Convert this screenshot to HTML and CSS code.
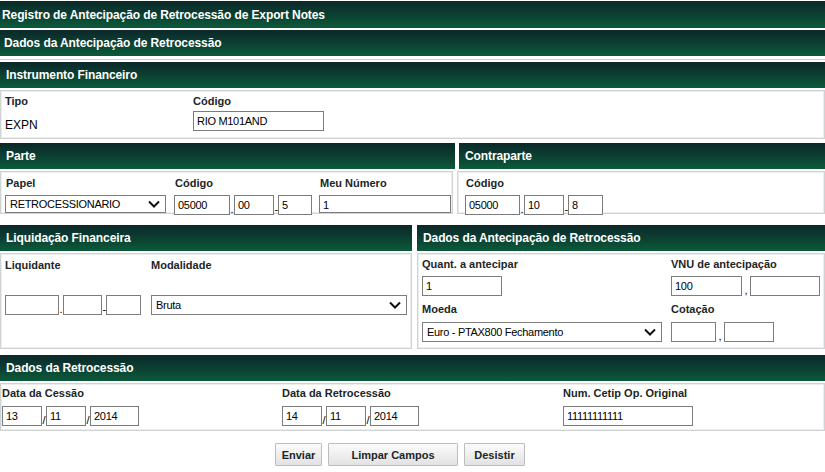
FILE: index.html
```html
<!DOCTYPE html>
<html lang="pt">
<head>
<meta charset="utf-8">
<link rel="stylesheet" href="styles.css">
</head>
<body>
<div class="page">
  <div class="bar title">Registro de Antecipação de Retrocessão de Export Notes</div>
  <div class="bar sub">Dados da Antecipação de Retrocessão</div>
  <div class="form">
    <section class="sec">
      <div class="bar h">Instrumento Financeiro</div>
      <div class="panel p-instr">
        <div class="col c-tipo">
          <div class="lbl">Tipo</div>
          <div class="val">EXPN</div>
        </div>
        <div class="col">
          <div class="lbl">Código</div>
          <div class="inp w131">RIO M101AND</div>
        </div>
      </div>
    </section>

    <div class="pair pair-a">
      <section class="sec">
        <div class="bar h">Parte</div>
        <div class="panel p-parte">
          <div class="col c-papel">
            <div class="lbl">Papel</div>
            <div class="sel w161"><span>RETROCESSIONARIO</span><svg width="14" height="10" viewBox="0 0 14 10"><path d="M2 2.5 L7 7.5 L12 2.5" fill="none" stroke="#111" stroke-width="2"/></svg></div>
          </div>
          <div class="col c-cod">
            <div class="lbl">Código</div>
            <div class="grp"><div class="inp w56">05000</div><span class="sep">.</span><div class="inp w40">00</div><span class="sep">-</span><div class="inp w34">5</div></div>
          </div>
          <div class="col">
            <div class="lbl">Meu Número</div>
            <div class="inp w132">1</div>
          </div>
        </div>
      </section>
      <section class="sec">
        <div class="bar h">Contraparte</div>
        <div class="panel p-contra">
          <div class="col">
            <div class="lbl">Código</div>
            <div class="grp"><div class="inp w55">05000</div><span class="sep">.</span><div class="inp w40">10</div><span class="sep">-</span><div class="inp w35">8</div></div>
          </div>
        </div>
      </section>
    </div>

    <div class="pair pair-b">
      <section class="sec">
        <div class="bar h">Liquidação Financeira</div>
        <div class="panel p-liq">
          <div class="col c-liq">
            <div class="lbl">Liquidante</div>
            <div class="grp low"><div class="inp w54"></div><span class="sep">.</span><div class="inp w39"></div><span class="sep">-</span><div class="inp w35"></div></div>
          </div>
          <div class="col">
            <div class="lbl">Modalidade</div>
            <div class="sel w256 low"><span>Bruta</span><svg width="14" height="10" viewBox="0 0 14 10"><path d="M2 2.5 L7 7.5 L12 2.5" fill="none" stroke="#111" stroke-width="2"/></svg></div>
          </div>
        </div>
      </section>
      <section class="sec">
        <div class="bar h">Dados da Antecipação de Retrocessão</div>
        <div class="panel p-ant">
          <div class="col c-ant">
            <div class="lbl">Quant. a antecipar</div>
            <div class="inp w80">1</div>
            <div class="lbl lbl2">Moeda</div>
            <div class="sel w240"><span>Euro - PTAX800 Fechamento</span><svg width="14" height="10" viewBox="0 0 14 10"><path d="M2 2.5 L7 7.5 L12 2.5" fill="none" stroke="#111" stroke-width="2"/></svg></div>
          </div>
          <div class="col">
            <div class="lbl">VNU de antecipação</div>
            <div class="grp"><div class="inp w71">100</div><span class="sep wide">,</span><div class="inp w70"></div></div>
            <div class="lbl lbl2">Cotação</div>
            <div class="grp"><div class="inp w45"></div><span class="sep wide">,</span><div class="inp w50"></div></div>
          </div>
        </div>
      </section>
    </div>

    <section class="sec s-ret">
      <div class="bar h">Dados da Retrocessão</div>
      <div class="panel p-ret">
        <div class="col c-ret1">
          <div class="lbl">Data da Cessão</div>
          <div class="grp"><div class="inp w40">13</div><span class="sep">/</span><div class="inp w40">11</div><span class="sep">/</span><div class="inp w49">2014</div></div>
        </div>
        <div class="col c-ret2">
          <div class="lbl">Data da Retrocessão</div>
          <div class="grp"><div class="inp w40">14</div><span class="sep">/</span><div class="inp w40">11</div><span class="sep">/</span><div class="inp w49">2014</div></div>
        </div>
        <div class="col">
          <div class="lbl">Num. Cetip Op. Original</div>
          <div class="inp w130">11111111111</div>
        </div>
      </div>
    </section>

    <div class="buttons">
      <button class="btn b-enviar">Enviar</button>
      <button class="btn b-limpar">Limpar Campos</button>
      <button class="btn b-desistir">Desistir</button>
    </div>
  </div>
</div>
</body>
</html>
```

FILE: styles.css
```css
* { box-sizing: border-box; }
html, body { margin: 0; padding: 0; background: #fff; }
body {
  font-family: "Liberation Sans", Arial, sans-serif;
  font-size: 11px;
  color: #000;
}
.page { width: 825px; padding-top: 1px; }

.bar {
  background: linear-gradient(to bottom, #0b2829 0%, #0b3d31 45%, #0c5a3a 100%);
  color: #fff;
  font-weight: bold;
  font-size: 12px;
  letter-spacing: -0.1px;
  display: flex;
  align-items: center;
  white-space: nowrap;
}
.title { height: 27px; padding-left: 2px; }
.sub { height: 26px; margin-top: 2px; padding-left: 4px; }
.form {
  margin-top: 3px;
  border-top: 1px solid #cdd3d3;
  padding-top: 2px;
}
.h { height: 26px; padding-left: 6px; }

.sec { display: flex; flex-direction: column; }
.panel {
  margin-top: 2px;
  border: 1px solid #cfd3d3;
  box-shadow: inset 0 0 0 1px #eceeee;
  display: flex;
}
.col { display: flex; flex-direction: column; }
.lbl { font-weight: bold; color: #1b2626; font-size: 11px; line-height: 13px; }
.val { font-size: 12px; line-height: 14px; }

.inp {
  height: 20px;
  border: 1px solid #7c7c7c;
  background: #fff;
  padding-left: 3px;
  font-size: 11px;
  letter-spacing: -0.3px;
  line-height: 18px;
  white-space: nowrap;
  overflow: hidden;
}
.sel {
  height: 20px;
  border: 1px solid #7c7c7c;
  background: #fff;
  padding: 0 4px 0 4px;
  font-size: 11px;
  letter-spacing: -0.3px;
  display: flex;
  align-items: center;
  justify-content: space-between;
}
.grp { display: flex; align-items: flex-end; }
.sep { width: 3px; font-size: 11px; line-height: 12px; text-align: center; margin: 0 0.5px; color: #000; }
.sep.wide { width: 8px; margin: 0; }

.w34 { width: 34px; } .w35 { width: 35px; } .w39 { width: 39px; } .w40 { width: 40px; }
.w45 { width: 45px; } .w49 { width: 49px; } .w50 { width: 50px; } .w54 { width: 54px; }
.w55 { width: 55px; } .w56 { width: 56px; } .w70 { width: 70px; } .w71 { width: 71px; }
.w80 { width: 80px; } .w130 { width: 130px; } .w131 { width: 131px; } .w132 { width: 132px; }
.w161 { width: 161px; } .w240 { width: 240px; } .w256 { width: 256px; }

/* Instrumento */
.p-instr { height: 49px; padding: 4px 0 0 4px; }
.p-instr .lbl { margin-bottom: 10px; }
.c-tipo { width: 188px; }
.p-instr .inp { margin-top: -7px; }

/* Parte / Contraparte */
.pair { display: grid; margin-top: 4px; }
.pair-a { grid-template-columns: 457px 368px; }
.pair-a > .sec:first-child .bar { margin-right: 2px; }
.pair-a > .sec:last-child .bar { margin-left: 2px; }
.p-parte { height: 43px; padding: 5px 0 0 4px; margin-right: 4px; }
.p-parte .lbl, .p-contra .lbl { margin-bottom: 5px; margin-left: 1px; }
.c-papel { width: 169px; }
.c-cod { width: 145px; }
.p-contra { height: 43px; padding: 5px 0 0 7px; }

/* Liquidação / Antecipação */
.pair-b { grid-template-columns: 417px 408px; margin-top: 11px; }
.pair-b > .sec:first-child .bar { margin-right: 5px; }
.p-liq { height: 96px; padding: 5px 0 0 4px; margin-right: 5px; }
.c-liq { width: 146px; }
.low { margin-top: 23px; }
.p-ant { height: 96px; padding: 4px 0 0 4px; }
.c-ant { width: 249px; }
.p-ant .lbl { margin-bottom: 5px; }
.p-ant .lbl2 { margin-top: 7px; margin-bottom: 6px; }

/* Retrocessão */
.s-ret { margin-top: 6px; }
.p-ret { height: 48px; padding: 3px 0 0 1px; }
.p-ret .lbl { margin-bottom: 6px; }
.c-ret1 { width: 280px; }
.c-ret2 { width: 281px; }

.buttons {
  display: flex;
  gap: 6px;
  padding-left: 275px;
  margin-top: 12px;
}
.btn {
  height: 23px;
  padding: 0;
  border: 1px solid #bdbdbd;
  background: linear-gradient(to bottom, #fbfbfb, #e2e2e2);
  font-family: "Liberation Sans", Arial, sans-serif;
  font-weight: bold;
  font-size: 11px;
  color: #1b2626;
  border-radius: 1px;
}
.b-enviar { width: 47px; }
.b-limpar { width: 130px; }
.b-desistir { width: 61px; }
```
